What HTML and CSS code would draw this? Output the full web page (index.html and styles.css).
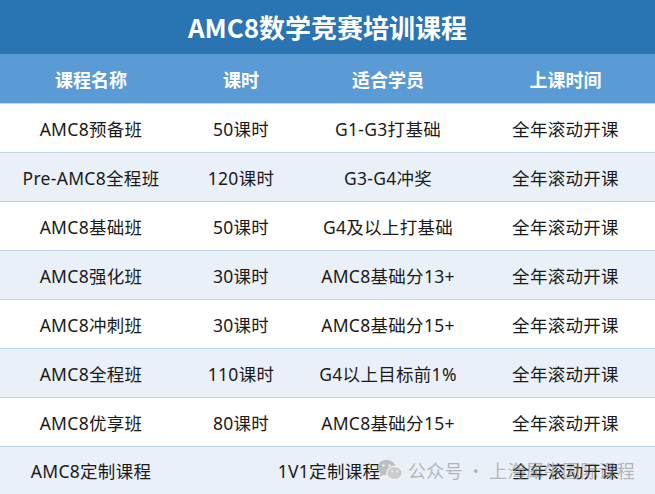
FILE: index.html
```html
<!DOCTYPE html>
<html lang="zh-CN">
<head>
<meta charset="utf-8">
<title>AMC8数学竞赛培训课程</title>
<link rel="stylesheet" href="styles.css">
</head>
<body>
<div class="page">
  <div class="title">AMC8数学竞赛培训课程</div>
  <div class="row head">
    <div>课程名称</div><div>课时</div><div>适合学员</div><div>上课时间</div>
  </div>
  <div class="row">
    <div>AMC8预备班</div><div>50课时</div><div>G1-G3打基础</div><div>全年滚动开课</div>
  </div>
  <div class="row alt">
    <div>Pre-AMC8全程班</div><div>120课时</div><div>G3-G4冲奖</div><div>全年滚动开课</div>
  </div>
  <div class="row">
    <div>AMC8基础班</div><div>50课时</div><div>G4及以上打基础</div><div>全年滚动开课</div>
  </div>
  <div class="row alt">
    <div>AMC8强化班</div><div>30课时</div><div>AMC8基础分13+</div><div>全年滚动开课</div>
  </div>
  <div class="row">
    <div>AMC8冲刺班</div><div>30课时</div><div>AMC8基础分15+</div><div>全年滚动开课</div>
  </div>
  <div class="row alt">
    <div>AMC8全程班</div><div>110课时</div><div>G4以上目标前1%</div><div>全年滚动开课</div>
  </div>
  <div class="row">
    <div>AMC8优享班</div><div>80课时</div><div>AMC8基础分15+</div><div>全年滚动开课</div>
  </div>
  <div class="row alt last">
    <div>AMC8定制课程</div><div class="span2">1V1定制课程</div><div>全年滚动开课</div>
  </div>
  <div class="watermark">
    <svg class="wx" width="26" height="22" viewBox="0 0 26 22">
      <ellipse cx="9.5" cy="8.5" rx="9" ry="7.8" fill="#b4b4b4"/>
      <path d="M3.5 14 L2.5 18 L7 15.5 Z" fill="#b4b4b4"/>
      <ellipse cx="17.5" cy="14" rx="7.8" ry="6.6" fill="#c4c4c4" stroke="#f4f4f4" stroke-width="1.2"/>
      <circle cx="6.5" cy="6.5" r="1.2" fill="#eee"/>
      <circle cx="12.5" cy="6.5" r="1.2" fill="#eee"/>
      <circle cx="15" cy="12.5" r="1" fill="#eee"/>
      <circle cx="20" cy="12.5" r="1" fill="#eee"/>
    </svg>
    <span class="wm-text">公众号 · 上海犀牛国际课程</span>
  </div>
</div>
</body>
</html>
```
FILE: styles.css
```css
* { box-sizing: border-box; }
html, body { margin: 0; padding: 0; background: #ffffff; }
body {
  font-family: "Noto Sans", "Noto Sans CJK SC", sans-serif;
  color: #1a1a1a;
}
.page {
  position: relative;
  width: 655px;
  height: 494px;
  overflow: hidden;
}
.title {
  height: 54px;
  background: #2b74b4;
  color: #ffffff;
  font-family: "Noto Sans CJK SC", sans-serif;
  font-weight: 700;
  font-size: 26px;
  display: flex;
  align-items: center;
  justify-content: center;
  padding-bottom: 2px;
}
.row {
  display: grid;
  grid-template-columns: 182px 118px 176px 1fr;
  height: 49px;
  border-top: 1px solid #bfd5ec;
  font-size: 17.5px;
  letter-spacing: 0.3px;
}
.row > div {
  display: flex;
  align-items: center;
  justify-content: center;
  white-space: nowrap;
}
.row .span2 { grid-column: span 2; }
.row.head {
  background: #5b9bd5;
  color: #ffffff;
  border-top: none;
  font-family: "Noto Sans CJK SC", sans-serif;
  font-weight: 700;
  font-size: 18px;
  letter-spacing: 0;
}
.row.alt { background: #eaf0f8; }
.row.last { height: 48px; }
.watermark {
  position: absolute;
  left: 377px;
  top: 457px;
  display: flex;
  align-items: center;
  gap: 5px;
  white-space: nowrap;
  color: rgba(140, 140, 140, 0.6);
  font-family: "Noto Sans CJK SC", sans-serif;
  font-size: 18px;
  letter-spacing: 0.2px;
  pointer-events: none;
}
.wm-text { white-space: nowrap; }
.wx { opacity: 0.8; flex: none; }
```
